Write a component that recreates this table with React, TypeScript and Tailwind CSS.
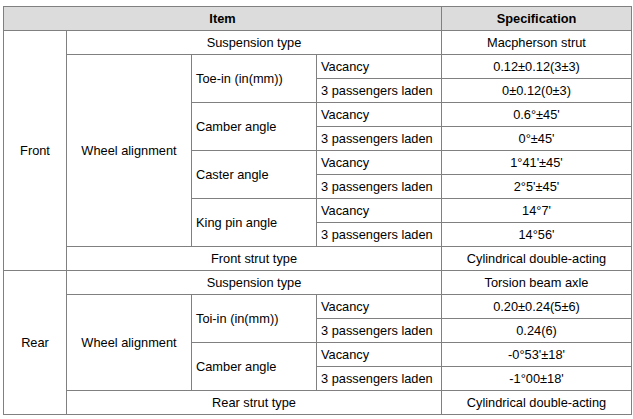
const td = "border border-[#808080] px-[4px] pt-[2px] pb-0 h-[24px] leading-none";

function Spec({ children }: { children: React.ReactNode }) {
  return <td className={`${td} text-center`}>{children}</td>;
}

function Left({ children, rowSpan }: { children: React.ReactNode; rowSpan?: number }) {
  return (
    <td rowSpan={rowSpan} className={`${td} text-left`}>
      {children}
    </td>
  );
}

function Center({
  children,
  rowSpan,
  colSpan,
}: {
  children: React.ReactNode;
  rowSpan?: number;
  colSpan?: number;
}) {
  return (
    <td rowSpan={rowSpan} colSpan={colSpan} className={`${td} text-center`}>
      {children}
    </td>
  );
}

export default function App() {
  return (
    <div className="w-[633px] h-[419px] bg-white pt-[6px] pl-[3px] text-[12.8px] text-black font-['Liberation_Sans',Arial,sans-serif]">
      <table className="table-fixed border-collapse w-[628px]">
        <colgroup>
          <col className="w-[63px]" />
          <col className="w-[125px]" />
          <col className="w-[125px]" />
          <col className="w-[125px]" />
          <col className="w-[190px]" />
        </colgroup>
        <thead>
          <tr className="bg-[#dcdcdc]">
            <th colSpan={4} className={`${td} font-bold text-center`}>
              Item
            </th>
            <th className={`${td} font-bold text-center`}>Specification</th>
          </tr>
        </thead>
        <tbody>
          <tr>
            <Center rowSpan={10}>Front</Center>
            <Center colSpan={3}>Suspension type</Center>
            <Spec>Macpherson strut</Spec>
          </tr>
          <tr>
            <Center rowSpan={8}>Wheel alignment</Center>
            <Left rowSpan={2}>Toe-in (in(mm))</Left>
            <Left>Vacancy</Left>
            <Spec>0.12±0.12(3±3)</Spec>
          </tr>
          <tr>
            <Left>3 passengers laden</Left>
            <Spec>0±0.12(0±3)</Spec>
          </tr>
          <tr>
            <Left rowSpan={2}>Camber angle</Left>
            <Left>Vacancy</Left>
            <Spec>0.6°±45'</Spec>
          </tr>
          <tr>
            <Left>3 passengers laden</Left>
            <Spec>0°±45'</Spec>
          </tr>
          <tr>
            <Left rowSpan={2}>Caster angle</Left>
            <Left>Vacancy</Left>
            <Spec>1°41'±45'</Spec>
          </tr>
          <tr>
            <Left>3 passengers laden</Left>
            <Spec>2°5'±45'</Spec>
          </tr>
          <tr>
            <Left rowSpan={2}>King pin angle</Left>
            <Left>Vacancy</Left>
            <Spec>14°7'</Spec>
          </tr>
          <tr>
            <Left>3 passengers laden</Left>
            <Spec>14°56'</Spec>
          </tr>
          <tr>
            <Center colSpan={3}>Front strut type</Center>
            <Spec>Cylindrical double-acting</Spec>
          </tr>
          <tr>
            <Center rowSpan={6}>Rear</Center>
            <Center colSpan={3}>Suspension type</Center>
            <Spec>Torsion beam axle</Spec>
          </tr>
          <tr>
            <Center rowSpan={4}>Wheel alignment</Center>
            <Left rowSpan={2}>Toi-in (in(mm))</Left>
            <Left>Vacancy</Left>
            <Spec>0.20±0.24(5±6)</Spec>
          </tr>
          <tr>
            <Left>3 passengers laden</Left>
            <Spec>0.24(6)</Spec>
          </tr>
          <tr>
            <Left rowSpan={2}>Camber angle</Left>
            <Left>Vacancy</Left>
            <Spec>-0°53'±18'</Spec>
          </tr>
          <tr>
            <Left>3 passengers laden</Left>
            <Spec>-1°00±18'</Spec>
          </tr>
          <tr>
            <Center colSpan={3}>Rear strut type</Center>
            <Spec>Cylindrical double-acting</Spec>
          </tr>
        </tbody>
      </table>
    </div>
  );
}
